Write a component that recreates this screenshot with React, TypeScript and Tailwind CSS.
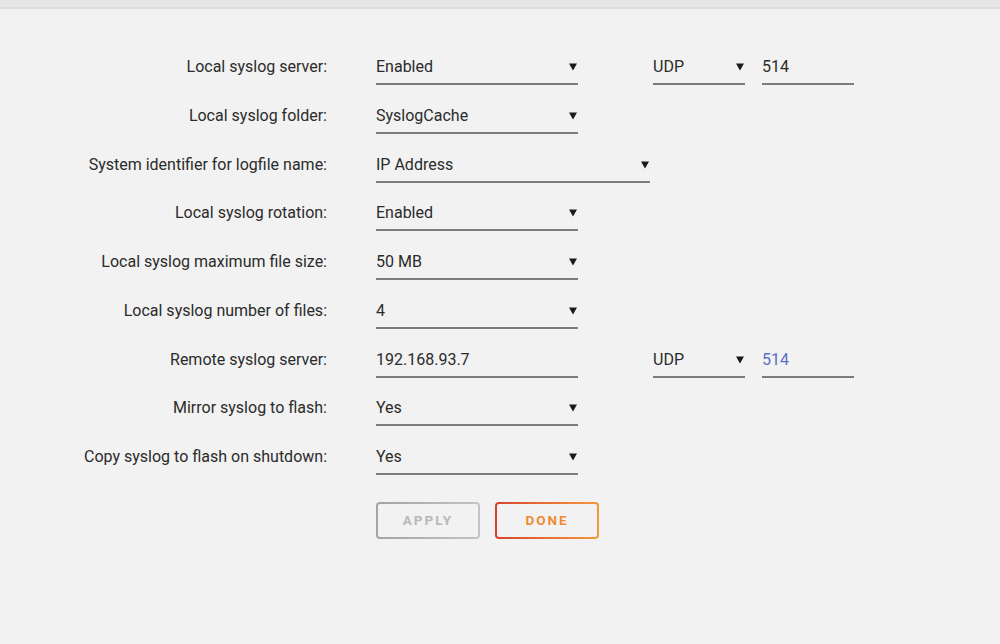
import React from "react";

const Arrow = () => (
  <svg width="8" height="8" viewBox="0 0 8 8" className="shrink-0">
    <polygon points="0,0.5 8,0.5 4,7.5" fill="#1a1a1a" />
  </svg>
);

type FieldProps = { value: string; w: string; arrow?: boolean; blue?: boolean };

const Field = ({ value, w, arrow = true, blue = false }: FieldProps) => (
  <div className={`${w} flex items-center justify-between pb-[6px] border-b-2 border-[#7c7c7c]`}>
    <span className={`text-[16px] leading-[20px] ${blue ? "text-[#5a6fc4]" : "text-[#2b2b2b]"}`}>{value}</span>
    {arrow && <span className="pr-[1px]"><Arrow /></span>}
  </div>
);

type Row = {
  label: string;
  value: string;
  wide?: boolean;
  arrow?: boolean;
  extra?: { port: string; blue?: boolean };
};

const rows: Row[] = [
  { label: "Local syslog server:", value: "Enabled", extra: { port: "514" } },
  { label: "Local syslog folder:", value: "SyslogCache" },
  { label: "System identifier for logfile name:", value: "IP Address", wide: true },
  { label: "Local syslog rotation:", value: "Enabled" },
  { label: "Local syslog maximum file size:", value: "50 MB" },
  { label: "Local syslog number of files:", value: "4" },
  { label: "Remote syslog server:", value: "192.168.93.7", arrow: false, extra: { port: "514", blue: true } },
  { label: "Mirror syslog to flash:", value: "Yes" },
  { label: "Copy syslog to flash on shutdown:", value: "Yes" },
];

export default function App() {
  return (
    <div
      className="w-[1000px] h-[644px] bg-[#f2f2f2] overflow-hidden"
      style={{ fontFamily: "Roboto, 'Open Sans', sans-serif" }}
    >
      <div className="h-[9px] bg-[#e6e6e6] border-b-2 border-[#dcdcdc]" />
      <div className="pt-[48px] flex flex-col">
        {rows.map((r) => (
          <div key={r.label} className="h-[48.75px] flex items-start">
            <div className="w-[327px] text-right text-[16px] leading-[20px] text-[#2b2b2b]">{r.label}</div>
            <div className="ml-[49px] flex items-start">
              <Field value={r.value} w={r.wide ? "w-[274px]" : "w-[202px]"} arrow={r.arrow !== false} />
              {r.extra && (
                <div className="ml-[75px] flex items-start gap-[17px]">
                  <Field value="UDP" w="w-[92px]" />
                  <Field value={r.extra.port} w="w-[92px]" arrow={false} blue={r.extra.blue} />
                </div>
              )}
            </div>
          </div>
        ))}
        <div className="ml-[376px] mt-[6px] flex gap-[15px]">
          <div className="w-[104px] h-[37px] rounded-[4px] p-[2px] bg-gradient-to-r from-[#a3a3a3] to-[#c4c4c4]">
            <div className="w-full h-full rounded-[2px] bg-[#f2f2f2] flex items-center justify-center text-[13.5px] font-bold tracking-[2px] text-[#b8b8b8]">
              APPLY
            </div>
          </div>
          <div className="w-[104px] h-[37px] rounded-[4px] p-[2px] bg-gradient-to-r from-[#d8412c] to-[#f3993a]">
            <div className="w-full h-full rounded-[2px] bg-[#f2f2f2] flex items-center justify-center text-[13.5px] font-bold tracking-[2px] text-[#ee8a35]">
              DONE
            </div>
          </div>
        </div>
      </div>
    </div>
  );
}
